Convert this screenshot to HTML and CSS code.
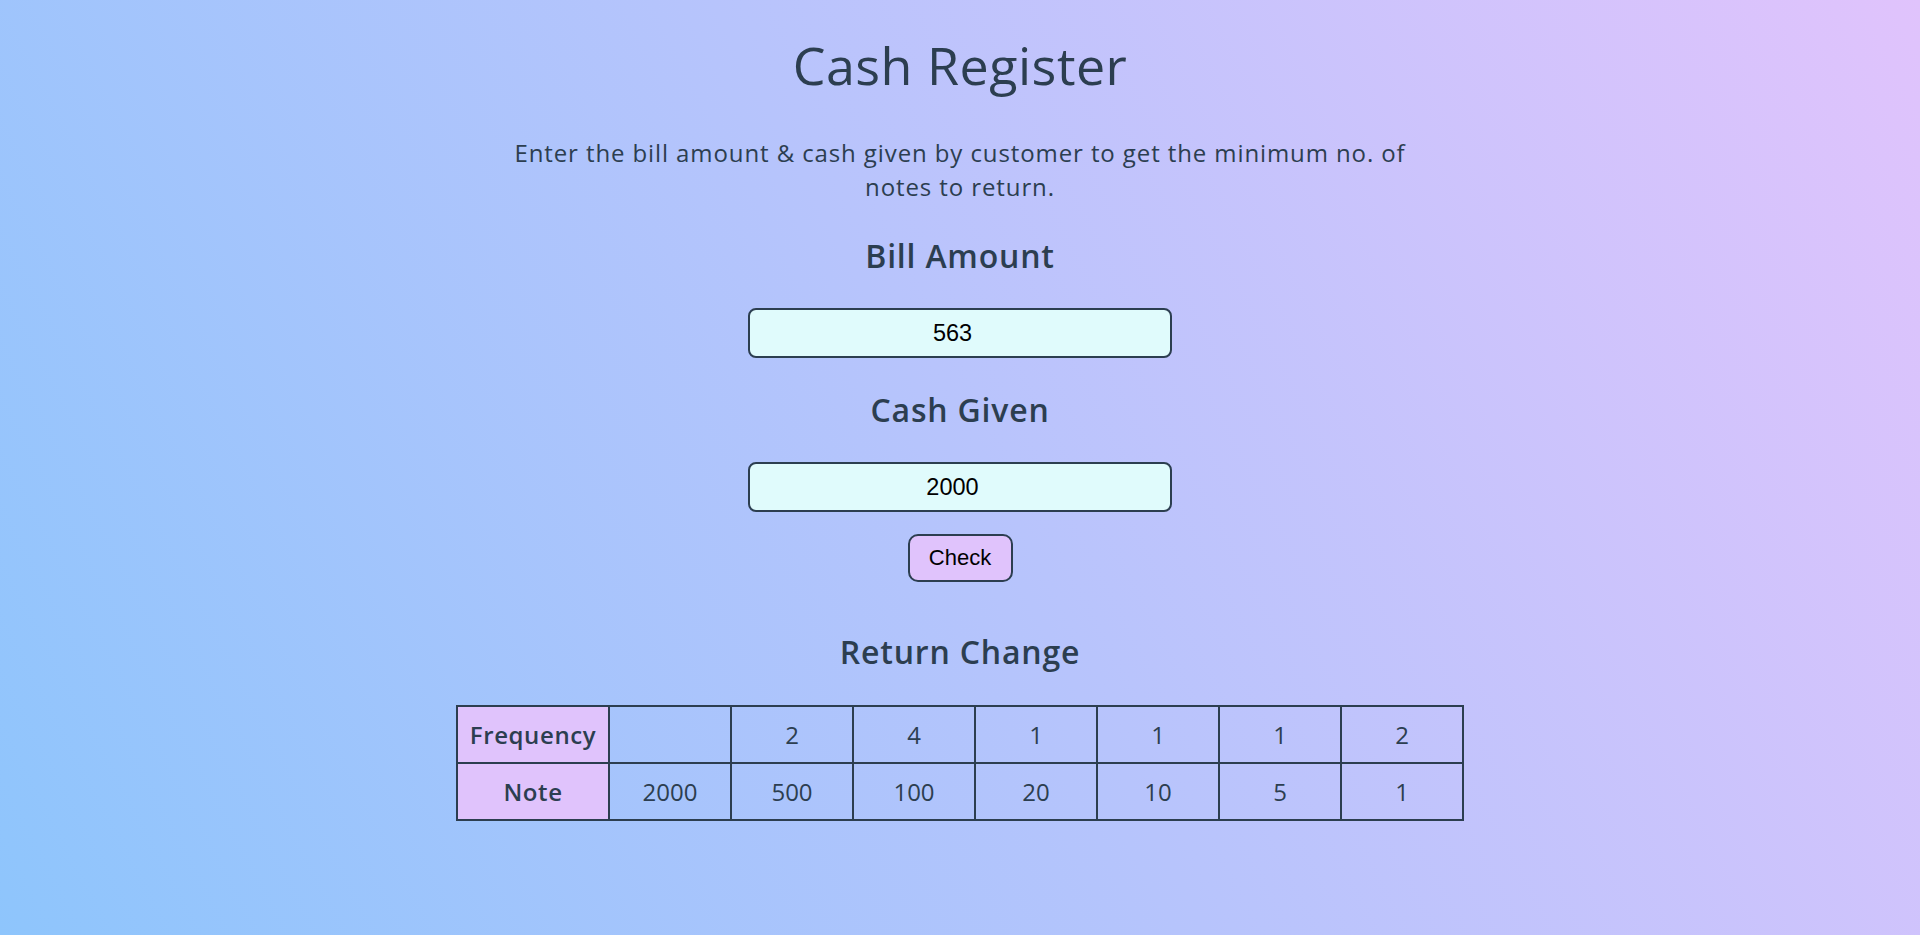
FILE: index.html
```html
<!DOCTYPE html>
<html lang="en">
<head>
<meta charset="utf-8">
<title>Cash Register</title>
<link rel="stylesheet" href="styles.css">
</head>
<body>
<main class="app">
  <h1 class="title">Cash Register</h1>
  <p class="intro">Enter the bill amount &amp; cash given by customer to get the minimum no. of notes to return.</p>
  <h2 class="label">Bill Amount</h2>
  <input class="field" type="number" value="563">
  <h2 class="label">Cash Given</h2>
  <input class="field" type="number" value="2000">
  <button class="check-btn" type="button">Check</button>
  <h2 class="label label-return">Return Change</h2>
  <table class="change-table">
    <tr>
      <th class="head-cell">Frequency</th>
      <td class="cell"></td>
      <td class="cell">2</td>
      <td class="cell">4</td>
      <td class="cell">1</td>
      <td class="cell">1</td>
      <td class="cell">1</td>
      <td class="cell">2</td>
    </tr>
    <tr>
      <th class="head-cell">Note</th>
      <td class="cell">2000</td>
      <td class="cell">500</td>
      <td class="cell">100</td>
      <td class="cell">20</td>
      <td class="cell">10</td>
      <td class="cell">5</td>
      <td class="cell">1</td>
    </tr>
  </table>
</main>
</body>
</html>
```
FILE: styles.css
```css
html, body {
  margin: 0;
  padding: 0;
}

body {
  min-height: 100vh;
  background-image: linear-gradient(62deg, #8ec5fc 0%, #e0c3fc 100%);
  background-attachment: fixed;
  color: #2c3e50;
  font-family: "Open Sans", "DejaVu Sans", sans-serif;
}

.app {
  display: flex;
  flex-direction: column;
  align-items: center;
  text-align: center;
  padding-top: 34px;
}

.title {
  margin: 0;
  font-size: 52px;
  line-height: 62px;
  font-weight: 400;
  letter-spacing: 0.5px;
}

.intro {
  margin: 40px 0 0;
  max-width: 910px;
  font-size: 24px;
  line-height: 34px;
  letter-spacing: 0.9px;
}

.label {
  margin: 33px 0 33px;
  font-size: 32px;
  line-height: 38px;
  font-weight: 600;
  letter-spacing: 0.8px;
}

.label-return {
  margin-top: 51px;
  margin-bottom: 34px;
}

.field {
  box-sizing: border-box;
  width: 424px;
  height: 50px;
  margin: 0;
  border: 2px solid #2c3e50;
  border-radius: 8px;
  background: #e0fbfc;
  color: #000;
  font-family: "Liberation Sans", Arial, sans-serif;
  font-size: 23.5px;
  text-align: center;
}

.check-btn {
  box-sizing: border-box;
  width: 105px;
  height: 48px;
  margin-top: 22px;
  border: 2px solid #2c3e50;
  border-radius: 10px;
  background: #e0c3fc;
  color: #000;
  font-family: "Liberation Sans", Arial, sans-serif;
  font-size: 22px;
}

.change-table {
  border-collapse: collapse;
  border: 2px solid #2c3e50;
  font-size: 24px;
}

.head-cell,
.cell {
  box-sizing: border-box;
  height: 57px;
  padding: 0 10px;
  border: 2px solid #2c3e50;
  text-align: center;
  vertical-align: middle;
}

.head-cell {
  width: 152px;
  background: #e0c3fc;
  font-weight: 600;
  letter-spacing: 0.6px;
}

.cell {
  width: 122px;
  font-weight: 400;
}
```
